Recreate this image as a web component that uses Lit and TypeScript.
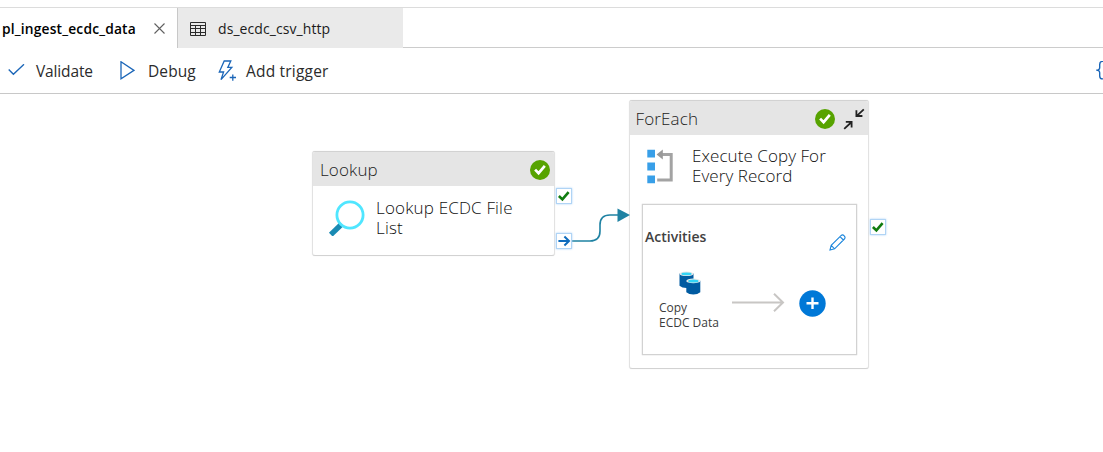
import { LitElement, html, svg, css } from "lit";
import { customElement, property } from "lit/decorators.js";

const statusIcon = html`<svg class="status" width="20" height="20" viewBox="0 0 20 20">
  <circle cx="10" cy="10" r="10" fill="#57a300" />
  <path d="M5.1 9.6 8.6 13.2 14.8 5.9" fill="none" stroke="#fff" stroke-width="2.7" />
</svg>`;

@customElement("flow-port")
export class FlowPort extends LitElement {
  @property() kind = "success";

  static styles = css`
    :host {
      display: block;
      box-sizing: border-box;
      width: 16px;
      height: 16px;
      border: 1px solid #b0d4f5;
      background: #fff;
      box-shadow: 0 0 2px #a9d1f7;
    }
    svg {
      display: block;
    }
  `;

  render() {
    const glyph =
      this.kind === "success"
        ? svg`<path d="M1.9 7 5.4 10.4 11.6 3.2" stroke="#107c10" stroke-width="2.6"/>`
        : svg`<path d="M1.4 7H12M7.4 2.5 12 7 7.4 11.5" stroke="#0f6cbd" stroke-width="2"/>`;
    return html`<svg width="14" height="14" viewBox="0 0 14 14" fill="none">${glyph}</svg>`;
  }
}

@customElement("activity-card")
export class ActivityCard extends LitElement {
  @property() type = "";

  static styles = css`
    :host {
      display: flex;
      flex-direction: column;
      box-sizing: border-box;
      border: 1px solid #d2d2d2;
      border-left-color: #e2e2e2;
      border-right-color: #e2e2e2;
      border-radius: 3px;
      background: #fff;
      box-shadow: 0 0 1px #ddd;
      overflow: hidden;
    }
    .head {
      display: flex;
      align-items: center;
      box-sizing: border-box;
      height: 34px;
      padding: 1px 4px 0 7px;
      background: #e5e5e5;
      color: #222;
      font-size: 17px;
      font-weight: 300;
      letter-spacing: 0.13px;
    }
    .type {
      flex: 1;
      margin-left: var(--type-shift, 0px);
    }
    .status {
      display: block;
    }
  `;

  render() {
    return html`
      <div class="head"><span class="type">${this.type}</span>${statusIcon}<slot name="tools"></slot></div>
      <slot></slot>
    `;
  }
}

@customElement("app-root")
export class AppRoot extends LitElement {
  static styles = css`
    :host {
      display: flex;
      flex-direction: column;
      width: 1103px;
      height: 452px;
      overflow: hidden;
      background: #fff;
      font-family: "Open Sans", "Noto Sans", sans-serif;
      color: #333;
      white-space: nowrap;
    }
    svg {
      display: block;
      flex: none;
    }
    .tabs {
      display: flex;
      box-sizing: border-box;
      height: 41px;
      margin-top: 7px;
      border-top: 1px solid #dcdcdc;
      font-size: 14px;
      color: #1b1b1b;
    }
    .tab {
      display: flex;
      align-items: center;
      box-sizing: border-box;
    }
    .tab.active {
      width: 178px;
      padding: 1px 0 0 2px;
      border-right: 1px solid #c8c8c8;
      font-weight: 600;
      font-size: 13.8px;
      letter-spacing: 0.17px;
      color: #000;
    }
    .tab.active .name {
      width: 152px;
    }
    .tab.other {
      width: 225px;
      padding: 1px 0 0 12px;
      gap: 12px;
      background: #eaeaea;
      letter-spacing: 0.08px;
    }
    .rest {
      flex: 1;
      border-bottom: 1px solid #ccc;
    }
    .toolbar {
      display: flex;
      align-items: center;
      box-sizing: border-box;
      height: 46px;
      padding-left: 8px;
      border-bottom: 1px solid #c8c8c8;
      font-size: 15.5px;
      color: #2b2b2b;
    }
    .validate {
      width: 84px;
      margin-left: 11px;
      letter-spacing: -0.15px;
    }
    .debug {
      width: 70px;
      margin-left: 13px;
      letter-spacing: 0.1px;
    }
    .trigger {
      margin-left: 9px;
      letter-spacing: 0.2px;
      flex: 1;
    }
    .canvas {
      position: relative;
      flex: 1;
    }
    .node {
      position: absolute;
    }
    .lookup {
      left: 312px;
      top: 57px;
      width: 243px;
      height: 105px;
    }
    .foreach {
      --type-shift: -1.5px;
      left: 629px;
      top: 6px;
      width: 240px;
      height: 269px;
    }
    .port-ok {
      left: 556px;
      top: 94px;
    }
    .port-go {
      left: 556px;
      top: 139px;
    }
    .port-end {
      left: 870px;
      top: 125px;
    }
    .link {
      position: absolute;
      left: 572px;
      top: 110px;
    }
    .body {
      display: flex;
      font-size: 17px;
      font-weight: 300;
      line-height: 20px;
      color: #111;
    }
    .lookup .body {
      gap: 10px;
      padding: 12px 0 0 15px;
      letter-spacing: 0.17px;
    }
    .foreach .body {
      gap: 16px;
      padding: 11px 0 0 16px;
      letter-spacing: 0.07px;
    }
    .collapse {
      margin: 0 -1px 0 8px;
    }
    .inner {
      box-sizing: border-box;
      width: 215px;
      height: 151px;
      margin: 18px 0 0 12px;
      border: 1px solid #d2d2d2;
      box-shadow: 0 0 1px #bbb;
    }
    .inner-head {
      display: flex;
      justify-content: space-between;
      padding: 22px 10px 0 2px;
      font-size: 14px;
      line-height: 20px;
      font-weight: 600;
      color: #414141;
    }
    .pencil {
      margin-top: 7px;
    }
    .flow {
      display: flex;
      padding: 20px 0 0 16px;
    }
    .copy {
      width: 73px;
      font-size: 12px;
      line-height: 15px;
      color: #3c3c3c;
    }
    .copy svg {
      margin: 0 0 5px 20px;
    }
    .arrow {
      margin: 22px 14px 0 0;
    }
    .plus {
      margin-top: 19px;
    }
  `;

  render() {
    return html`
      <div class="tabs">
        <div class="tab active">
          <span class="name">pl_ingest_ecdc_data</span>
          <svg width="11" height="11" viewBox="0 0 11 11" stroke="#606060" stroke-width="1.1">
            <path d="M.5.5 10.5 10.5M10.5.5.5 10.5" />
          </svg>
        </div>
        <div class="tab other">
          <svg width="16" height="14" viewBox="0 0 16 14" fill="none" stroke="#2b2b2b">
            <path d="M.5.5H15.5V13.5H.5ZM.5 3.5H15.5M.5 6.5H15.5M.5 10.5H15.5M5.5 3.5V13.5M10.5 3.5V13.5" />
          </svg>
          <span>ds_ecdc_csv_http</span>
        </div>
        <div class="rest"></div>
      </div>
      <div class="toolbar">
        <svg width="17" height="13" viewBox="0 0 17 13" fill="none" stroke="#1b66b8" stroke-width="1.4">
          <path d="M.7 5.6 5.4 10.3 16 .3" />
        </svg>
        <span class="validate">Validate</span>
        <svg width="15" height="20" viewBox="0 0 15 20" fill="none" stroke="#1b66b8" stroke-width="1.3">
          <path d="M1 .8V17.9L14 9.4Z" />
        </svg>
        <span class="debug">Debug</span>
        <svg width="19" height="22" viewBox="0 0 19 22" fill="none" stroke="#1b66b8" stroke-width="1.3">
          <path d="M6.2 1H12.8L9.8 7.4H13.8L3 19.6 5.6 12H1.3Z" />
          <path d="M11.7 17.5H18M14.8 14.4V20.7" />
        </svg>
        <span class="trigger">Add trigger</span>
        <svg width="8" height="20" viewBox="0 0 8 20" fill="none" stroke="#1b66b8" stroke-width="1.4">
          <path d="M9 .4H7.5Q4.7.4 4.7 3.4V6.4Q4.7 9.1 1.2 9.1 4.7 9.1 4.7 11.8V14.9Q4.7 17.9 7.5 17.9H9" />
        </svg>
      </div>
      <div class="canvas">
        <activity-card class="node lookup" type="Lookup">
          <div class="body">
            <svg width="38" height="38" viewBox="0 0 38 38" fill="none">
              <path d="M2.8 36.6 13.8 26" stroke="#198ab3" stroke-width="5.4" />
              <circle cx="22" cy="17" r="13.1" stroke="#50e6ff" stroke-width="2.8" />
            </svg>
            <span>Lookup ECDC File<br />List</span>
          </div>
        </activity-card>

        <svg class="link" width="60" height="50" viewBox="0 0 60 50">
          <path d="M0 37H18Q28 37 28 27V21Q28 11 38 11H47" fill="none" stroke="#1f82a3" stroke-width="1.6" />
        </svg>
        <flow-port class="node port-ok" kind="success"></flow-port>
        <flow-port class="node port-go" kind="completion"></flow-port>

        <activity-card class="node foreach" type="ForEach">
          <svg slot="tools" class="collapse" width="22" height="22" viewBox="0 0 22 22" fill="none" stroke="#222" stroke-width="1.8">
            <path d="M1.2 20.8 8.6 14M2.8 13.8H8.6V19.6" />
            <path d="M20.8 1.4 13.8 7.8M13.4 2.2V8H19.4" />
          </svg>
          <div class="body">
            <svg width="30" height="40" viewBox="0 0 30 40">
              <path d="M1.3 3.8H9V11.6H1.3ZM1.3 16.6H9V24.4H1.3ZM1.3 29.4H9V37.2H1.3Z" fill="#389fe8" />
              <path d="M15 8.4H25.2V34H11.2" fill="none" stroke="#a3a3a3" stroke-width="3" />
              <path d="M10.6 8.4 16.8 3.4V13.4Z" fill="#999" />
            </svg>
            <span>Execute Copy For<br />Every Record</span>
          </div>
          <div class="inner">
            <div class="inner-head">
              <span>Activities</span>
              <svg class="pencil" width="17" height="17" viewBox="0 0 17 17" fill="none" stroke="#1c86dc" stroke-width="1.1">
                <path d="M1 16 2.2 11.4 12 1.6Q13.6.2 15.2 1.8 16.8 3.4 15.4 5L5.6 14.8ZM2.2 11.4 5.6 14.8M11 2.6 14.4 6" />
              </svg>
            </div>
            <div class="flow">
              <div class="copy">
                <svg width="22" height="24" viewBox="0 0 22 24">
                  <path d="M.5 2.6V14.8Q3 17 7.5 17 12 17 14.5 14.8V2.6Z" fill="#005ba1" />
                  <ellipse cx="7.5" cy="2.8" rx="7" ry="2.3" fill="#e8e8e8" />
                  <ellipse cx="7.5" cy="2.9" rx="5.2" ry="1.4" fill="#32d4f5" />
                  <path d="M7.3 9.8V21.3Q10 23.5 14.3 23.5 18.6 23.5 21.3 21.3V9.8Z" fill="#005ba1" />
                  <ellipse cx="14.3" cy="9.9" rx="7" ry="2.4" fill="#e8e8e8" />
                  <ellipse cx="14.3" cy="10" rx="5.2" ry="1.5" fill="#32d4f5" />
                </svg>
                Copy<br />ECDC Data
              </div>
              <svg class="arrow" width="53" height="19" viewBox="0 0 53 19" fill="none" stroke="#c8c6c4" stroke-width="2">
                <path d="M0 9.5H51M42 .8 51 9.5 42 18.2" />
              </svg>
              <svg class="plus" width="27" height="27" viewBox="0 0 27 27">
                <circle cx="13.5" cy="13.5" r="13.2" fill="#0078d7" />
                <path d="M7.5 13.2H19.5M13.5 7.5V18.9" stroke="#fff" stroke-width="2.4" />
              </svg>
            </div>
          </div>
        </activity-card>
        <svg class="link" width="60" height="50" viewBox="0 0 60 50">
          <path d="M45.5 4.5 58 11 45.5 18Z" fill="#1f82a3" />
        </svg>
        <flow-port class="node port-end" kind="success"></flow-port>
      </div>
    `;
  }
}
